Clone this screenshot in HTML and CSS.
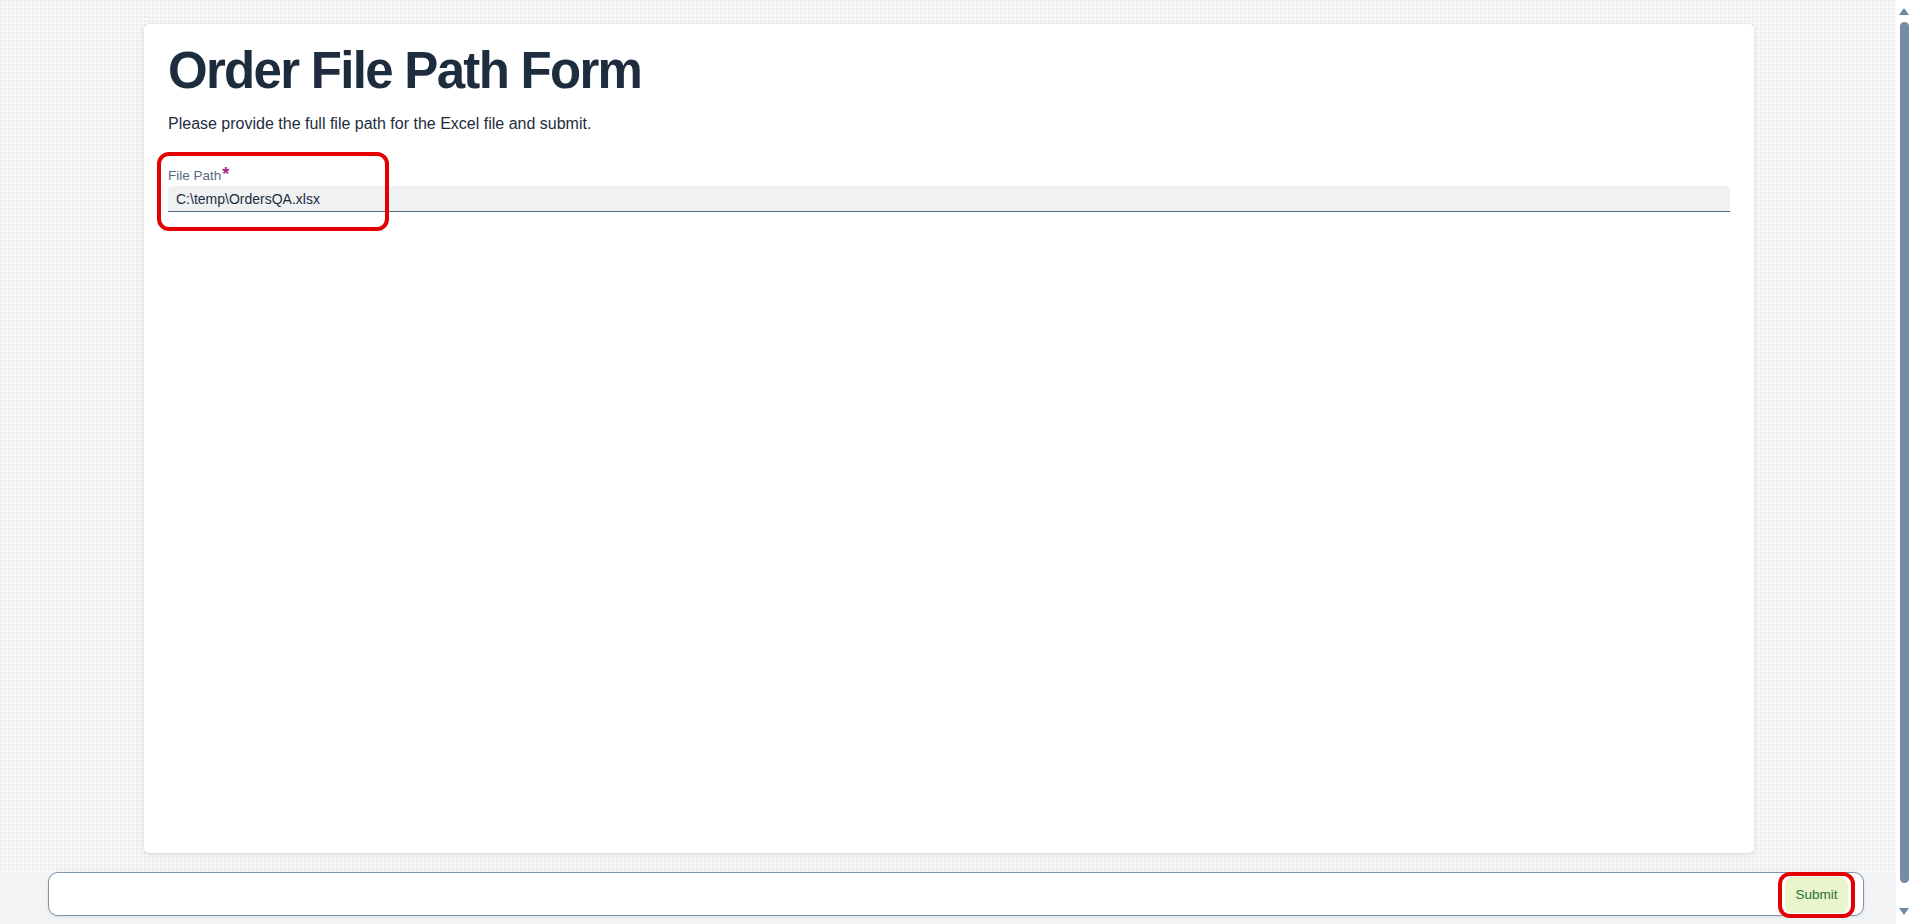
FILE: index.html
```html
<!DOCTYPE html>
<html lang="en">
<head>
<meta charset="utf-8">
<title>Order File Path Form</title>
<link rel="stylesheet" href="styles.css">
</head>
<body>
<div class="app">
  <div class="main">
    <div class="content">
      <section class="card">
        <h1 class="title">Order File Path Form</h1>
        <p class="desc">Please provide the full file path for the Excel file and submit.</p>
        <div class="field">
          <label class="label" for="path">File Path<span class="req">*</span></label>
          <input class="input" id="path" type="text" value="C:\temp\OrdersQA.xlsx">
          <span class="mark mark-field"></span>
        </div>
      </section>
    </div>
    <footer class="footer">
      <div class="bar">
        <button class="submit" type="button">Submit<span class="mark mark-btn"></span></button>
      </div>
    </footer>
  </div>
  <div class="scrollbar">
    <span class="arrow arrow-up"></span>
    <span class="thumb"></span>
    <span class="arrow arrow-down"></span>
  </div>
</div>
</body>
</html>
```

FILE: styles.css
```css
html, body {
  margin: 0;
  padding: 0;
  height: 100%;
  overflow: hidden;
}

body {
  font-family: "Liberation Sans", Arial, sans-serif;
  color: #1d2d3e;
  background: #f5f6f7;
}

.app {
  display: grid;
  grid-template-columns: 1fr 16px;
  height: 924px;
}

.main {
  display: flex;
  flex-direction: column;
  background-color: #f5f6f7;
  background-image: radial-gradient(circle at 1px 1px, #e2e4e7 0.6px, transparent 0.9px);
  background-size: 4px 4px;
}

.content {
  height: 872px;
  box-sizing: border-box;
  padding-top: 24px;
}

.card {
  box-sizing: border-box;
  width: 1610px;
  height: 829px;
  margin-left: 144px;
  padding: 16px 24px;
  background: #ffffff;
  border-radius: 5px;
  box-shadow: 0 0 2px rgba(34, 53, 72, 0.16), 0 2px 4px rgba(34, 53, 72, 0.07);
}

.title {
  margin: 0;
  font-size: 51px;
  line-height: 62px;
  font-weight: 700;
  letter-spacing: -1.7px;
  color: #1d2d3e;
}

.desc {
  margin: 12px 0 0;
  font-size: 16px;
  line-height: 20px;
  color: #1d2d3e;
}

.field {
  position: relative;
  margin-top: 34px;
  display: flex;
  flex-direction: column;
}

.label {
  font-size: 13.5px;
  line-height: 16px;
  color: #556b82;
  margin-bottom: 2px;
}

.req {
  color: #a8287a;
  font-weight: 700;
  font-size: 18px;
  line-height: 10px;
  margin-left: 1px;
}

.input {
  box-sizing: border-box;
  height: 26px;
  width: 100%;
  margin: 0;
  padding: 0 8px;
  border: none;
  border-bottom: 1px solid #556b82;
  border-radius: 4px 4px 0 0;
  background: #eff1f2;
  font-family: "Liberation Sans", Arial, sans-serif;
  font-size: 14px;
  color: #1d2d3e;
  outline: none;
}

.mark {
  position: absolute;
  box-sizing: border-box;
  border: 4px solid #e30000;
  border-radius: 12px;
  pointer-events: none;
}

.mark-field {
  left: -11px;
  top: -16px;
  width: 232px;
  height: 79px;
}

.footer {
  flex: 1;
  background: #f3f4f5;
  padding: 0 32px 8px 48px;
}

.bar {
  box-sizing: border-box;
  height: 44px;
  display: flex;
  justify-content: flex-end;
  align-items: center;
  padding: 0 15px;
  background: #ffffff;
  border: 1px solid #7f93a8;
  border-radius: 10px;
  box-shadow: 0 1px 3px rgba(34, 53, 72, 0.15);
}

.submit {
  position: relative;
  box-sizing: border-box;
  width: 63px;
  height: 36px;
  margin-top: 1px;
  padding: 0;
  border: none;
  border-radius: 8px;
  background: #ebf5cb;
  color: #256f3a;
  font-family: "Liberation Sans", Arial, sans-serif;
  font-size: 13.5px;
  cursor: pointer;
}

.mark-btn {
  left: -7px;
  top: -5px;
  width: 77px;
  height: 46px;
}

.scrollbar {
  display: flex;
  flex-direction: column;
  align-items: center;
  background: #ffffff;
  padding-top: 8px;
}

.arrow {
  width: 0;
  height: 0;
  border-left: 5px solid transparent;
  border-right: 5px solid transparent;
}

.arrow-up {
  border-bottom: 7px solid #7189a3;
}

.arrow-down {
  border-top: 7px solid #7189a3;
  margin-top: 25px;
}

.thumb {
  width: 9px;
  height: 861px;
  margin-top: 7px;
  border-radius: 5px;
  background: #758ca4;
}
```
